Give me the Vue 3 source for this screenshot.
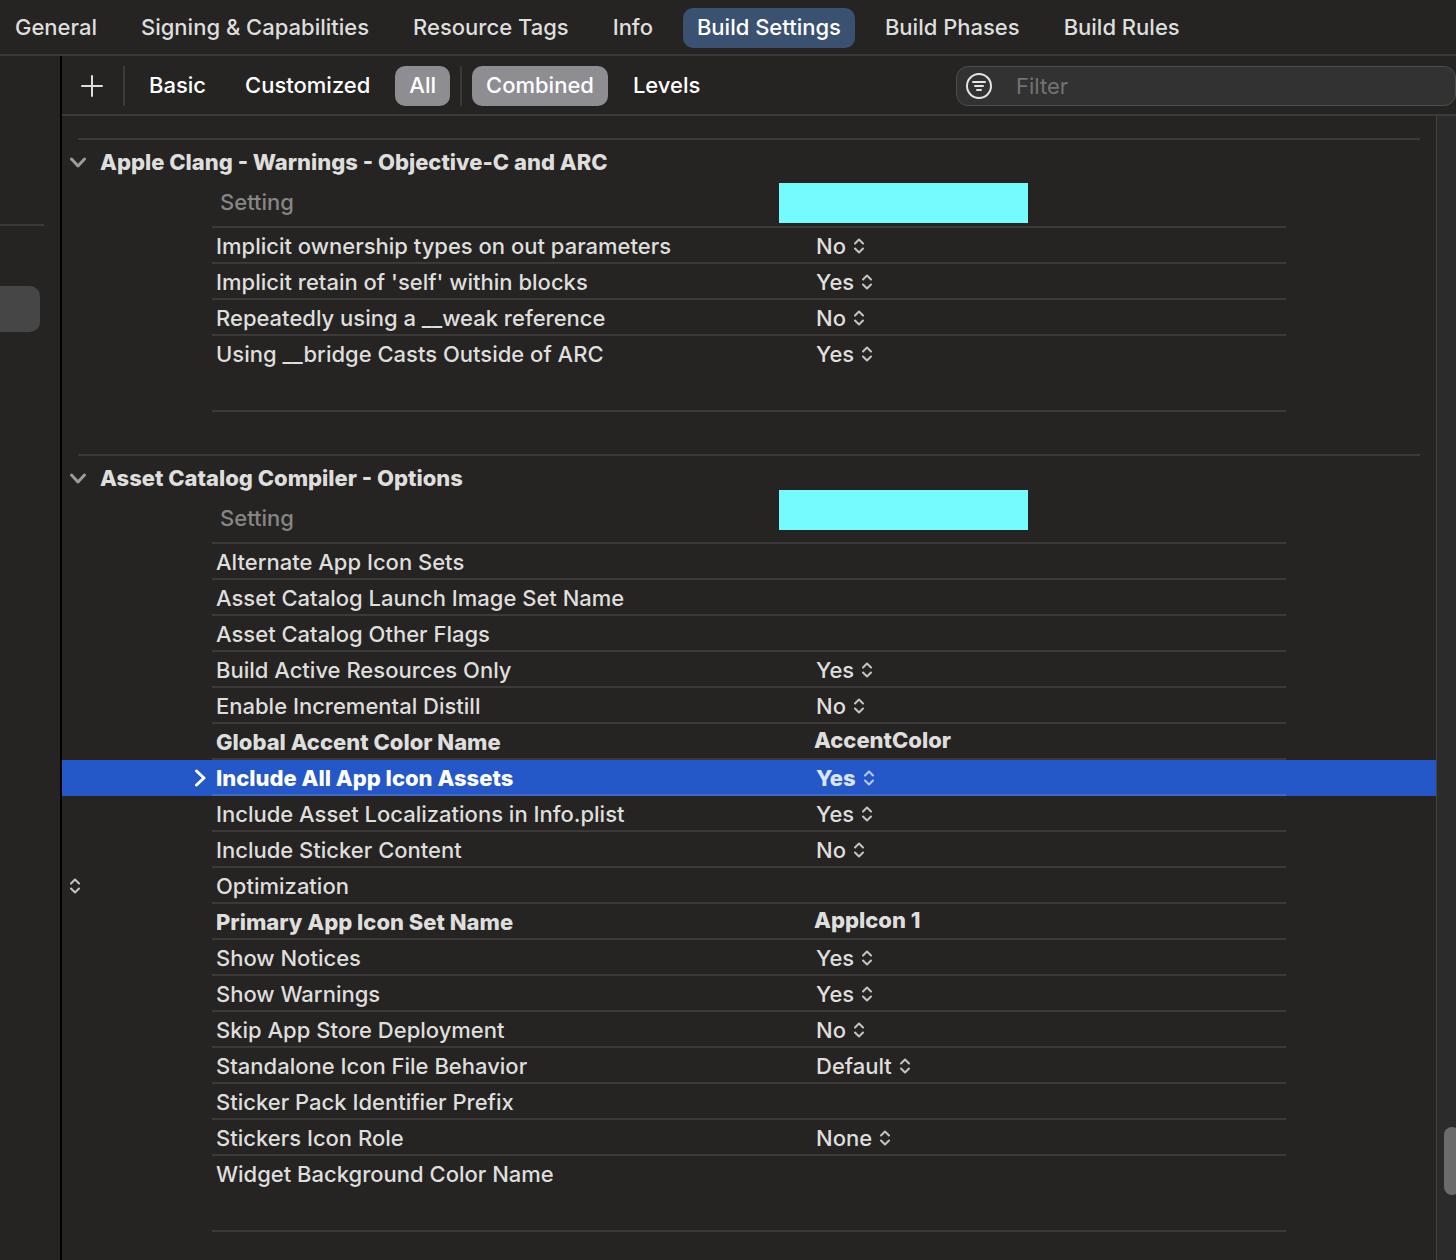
<template>
  <div class="editor">
    <nav class="tabs">
      <button
        v-for="tab in tabs"
        :key="tab"
        type="button"
        class="tab"
        :class="{ active: tab === activeTab }"
        @click="activeTab = tab"
      >{{ tab }}</button>
    </nav>

    <div class="body">
      <aside class="sidebar">
        <div class="sidebar-line"></div>
        <div class="sidebar-item"></div>
      </aside>

      <main class="main">
        <div class="toolbar">
          <button type="button" class="add" aria-label="Add build setting">
            <svg width="22" height="22" viewBox="0 0 22 22">
              <path d="M11 1v20M1 11h20" />
            </svg>
          </button>
          <span class="divider"></span>
          <div class="scopes">
            <button
              v-for="s in scopes"
              :key="s"
              type="button"
              class="scope"
              :class="{ active: s === scope }"
              @click="scope = s"
            >{{ s }}</button>
          </div>
          <span class="divider"></span>
          <div class="scopes">
            <button
              v-for="m in modes"
              :key="m"
              type="button"
              class="scope"
              :class="{ active: m === mode }"
              @click="mode = m"
            >{{ m }}</button>
          </div>
          <label class="filter">
            <svg width="26" height="26" viewBox="0 0 26 26">
              <circle cx="13" cy="13" r="12" />
              <path d="M7 9h12M9 13h8M11 17h4" />
            </svg>
            <input v-model="filter" type="text" placeholder="Filter" aria-label="Filter" />
          </label>
        </div>

        <div class="content">
          <div class="sections">
            <section v-for="section in sections" :key="section.title" class="section">
              <h2 class="section-title">
                <svg width="18" height="12" viewBox="0 0 18 12">
                  <path d="M2.5 3L9 10l6.500-7" />
                </svg>
                {{ section.title }}
              </h2>
              <table class="settings">
                <colgroup>
                  <col class="col-gutter" />
                  <col class="col-name" />
                  <col />
                  <col class="col-gutter" />
                </colgroup>
                <thead>
                  <tr>
                    <td></td>
                    <th scope="col">Setting</th>
                    <td class="target">
                      <span class="mask" :style="{ top: section.maskTop + 'px' }"></span>
                    </td>
                    <td></td>
                  </tr>
                </thead>
                <tbody>
                  <tr
                    v-for="row in section.rows"
                    :key="row.name"
                    :class="{ bold: row.bold, selected: row.selected }"
                  >
                    <td class="gutter">
                      <span v-if="row.loose" class="popup loose">
                        <select :aria-label="row.name"><option></option></select>
                        <svg width="10" height="16" viewBox="0 0 10 16">
                          <path d="M1 5.500l4-4 4 4M1 10.500l4 4 4-4" />
                        </svg>
                      </span>
                      <svg v-if="row.selected" class="disclosure" width="12" height="18" viewBox="0 0 12 18">
                        <path d="M2.500 2l7.500 7-7.500 7" />
                      </svg>
                    </td>
                    <th scope="row">{{ row.name }}</th>
                    <td class="value">
                      <span v-if="row.text" class="text">{{ row.text }}</span>
                      <span v-else-if="row.value" class="popup">
                        <select v-model="row.value" :aria-label="row.name">
                          <option v-for="o in row.options" :key="o">{{ o }}</option>
                        </select>
                        <svg width="10" height="16" viewBox="0 0 10 16">
                          <path d="M1 5.500l4-4 4 4M1 10.500l4 4 4-4" />
                        </svg>
                      </span>
                    </td>
                    <td></td>
                  </tr>
                </tbody>
              </table>
              <div class="section-end"></div>
            </section>
          </div>
          <div class="scrollbar">
            <div class="thumb"></div>
          </div>
        </div>
      </main>
    </div>
  </div>
</template>

<script setup>
import { reactive, ref } from 'vue'

const tabs = [
  'General',
  'Signing & Capabilities',
  'Resource Tags',
  'Info',
  'Build Settings',
  'Build Phases',
  'Build Rules',
]
const activeTab = ref('Build Settings')

const scopes = ['Basic', 'Customized', 'All']
const scope = ref('All')

const modes = ['Combined', 'Levels']
const mode = ref('Combined')

const filter = ref('')

const bool = (name, value, extra = {}) => ({ name, value, options: ['Yes', 'No'], ...extra })

const sections = reactive([
  {
    title: 'Apple Clang - Warnings - Objective-C and ARC',
    maskTop: -1,
    rows: [
      bool('Implicit ownership types on out parameters', 'No'),
      bool("Implicit retain of 'self' within blocks", 'Yes'),
      bool('Repeatedly using a __weak reference', 'No'),
      bool('Using __bridge Casts Outside of ARC', 'Yes'),
    ],
  },
  {
    title: 'Asset Catalog Compiler - Options',
    maskTop: -10,
    rows: [
      { name: 'Alternate App Icon Sets' },
      { name: 'Asset Catalog Launch Image Set Name' },
      { name: 'Asset Catalog Other Flags' },
      bool('Build Active Resources Only', 'Yes'),
      bool('Enable Incremental Distill', 'No'),
      { name: 'Global Accent Color Name', text: 'AccentColor', bold: true },
      bool('Include All App Icon Assets', 'Yes', { bold: true, selected: true }),
      bool('Include Asset Localizations in Info.plist', 'Yes'),
      bool('Include Sticker Content', 'No'),
      { name: 'Optimization', loose: true },
      { name: 'Primary App Icon Set Name', text: 'AppIcon 1', bold: true },
      bool('Show Notices', 'Yes'),
      bool('Show Warnings', 'Yes'),
      bool('Skip App Store Deployment', 'No'),
      { name: 'Standalone Icon File Behavior', value: 'Default', options: ['Default'] },
      { name: 'Sticker Pack Identifier Prefix' },
      { name: 'Stickers Icon Role', value: 'None', options: ['None'] },
      { name: 'Widget Background Color Name' },
    ],
  },
])
</script>

<style>
body {
  margin: 0;
  background: #252422;
}
</style>

<style scoped>
.editor {
  display: flex;
  flex-direction: column;
  min-height: 100vh;
  background: #252422;
  color: #dededd;
  font-family: Inter, "Liberation Sans", sans-serif;
  font-size: 22px;
  overflow: hidden;
}

button,
input,
select {
  margin: 0;
  padding: 0;
  border: 0;
  background: none;
  color: inherit;
  font: inherit;
}

svg {
  display: block;
  flex: none;
  fill: none;
  stroke: currentColor;
  stroke-linecap: round;
  stroke-linejoin: round;
}

.tabs {
  display: flex;
  align-items: center;
  gap: 16px;
  height: 56px;
  padding: 2px 0 0 1px;
  box-sizing: border-box;
  border-bottom: 2px solid #3b3a38;
}

.tab,
.scope {
  height: 40px;
  padding: 0 14px 2px;
  border-radius: 10px;
  font-weight: 500;
  white-space: nowrap;
}

.tab.active {
  background: #3a5172;
  color: #fff;
}

.body {
  display: flex;
  flex: 1;
}

.sidebar {
  flex: none;
  width: 60px;
  border-right: 2px solid #000;
}

.sidebar-line {
  width: 44px;
  height: 2px;
  margin-top: 168px;
  background: #3b3a38;
}

.sidebar-item {
  width: 40px;
  height: 46px;
  margin-top: 60px;
  border-radius: 0 10px 10px 0;
  background: #464646;
}

.main {
  display: flex;
  flex: 1;
  flex-direction: column;
  min-width: 0;
}

.toolbar {
  display: flex;
  align-items: center;
  height: 60px;
  padding-top: 2px;
  box-sizing: border-box;
  border-bottom: 2px solid #3b3a38;
  color: #fff;
}

.add {
  padding: 0 20px 0 19px;
  color: #dededd;
}

.add svg {
  stroke-width: 2;
}

.divider {
  width: 2px;
  height: 40px;
  background: #3b3a38;
}

.scopes {
  display: flex;
  gap: 11px;
  padding: 0 10px;
}

.scope.active {
  background: #8e8d92;
}

.filter {
  display: flex;
  align-items: center;
  gap: 24px;
  width: 500px;
  height: 40px;
  margin-left: auto;
  padding-left: 9px;
  box-sizing: border-box;
  border: 1px solid #4d4d4c;
  border-radius: 12px;
  background: #323232;
}

.filter svg {
  color: #e4e4e4;
  stroke-width: 2;
}

.filter input {
  flex: 1;
  min-width: 0;
  outline: none;
}

.filter input::placeholder {
  color: #737373;
  opacity: 1;
}

.content {
  display: flex;
  flex: 1;
}

.sections {
  flex: 1;
  min-width: 0;
  padding: 22px 0 28px;
}

.section + .section {
  margin-top: 42px;
}

.section-title {
  display: flex;
  align-items: center;
  gap: 13px;
  height: 44px;
  margin: 0 16px;
  border-top: 2px solid #3b3a38;
  font-size: 22px;
  font-weight: 800;
}

.section-title svg {
  margin-left: -9px;
  color: #9b9b9a;
  stroke-width: 3;
}

.settings {
  width: 100%;
  table-layout: fixed;
  border-collapse: separate;
  border-spacing: 0;
}

.col-gutter {
  width: 150px;
}

.col-name {
  width: 600px;
}

.settings th,
.settings td {
  height: 36px;
  padding: 2px 4px 0;
  box-sizing: border-box;
  line-height: 32px;
  text-align: left;
  font-weight: 450;
  white-space: nowrap;
}

.settings th,
.settings th + td {
  border-bottom: 2px solid #3b3a38;
}

.settings tbody tr:last-child > * {
  border-bottom-color: transparent;
}

.settings thead th,
.settings thead td {
  height: 44px;
  vertical-align: top;
}

.settings thead th {
  padding-left: 8px;
  color: #868685;
}

.settings .target {
  position: relative;
}

.mask {
  position: absolute;
  left: -33px;
  width: 249px;
  height: 40px;
  background: #73fbfd;
}

.settings .bold th,
.settings .bold .value {
  font-weight: 800;
}

.selected {
  background: #2458c9;
  color: #fff;
}

.settings .selected th,
.settings .selected th + td {
  border-bottom-color: #4069c7;
}

.settings .gutter {
  padding: 0 6px 0 8px;
}

.disclosure {
  margin-left: auto;
  stroke-width: 3;
}

.text {
  display: block;
  margin: 0 0 4px -2px;
  line-height: 28px;
}

.popup {
  position: relative;
  display: flex;
  align-items: center;
  width: fit-content;
  height: 32px;
}

.popup select {
  height: 32px;
  padding-right: 18px;
  appearance: none;
  field-sizing: content;
  outline: none;
}

.popup svg {
  position: absolute;
  right: 0;
  color: #c4c4c3;
  stroke-width: 2;
  pointer-events: none;
}

.selected .popup {
  color: #dbe5fb;
}

.selected .popup svg {
  color: #b9cbf3;
}

.popup.loose select {
  width: 10px;
  padding: 0;
}

.section-end {
  height: 38px;
  margin: 0 150px;
  border-bottom: 2px solid #3b3a38;
}

.scrollbar {
  position: relative;
  flex: none;
  width: 19px;
  border-left: 1px solid #434342;
  background: #2b2b2b;
  overflow: hidden;
}

.thumb {
  position: absolute;
  bottom: 65px;
  left: 7px;
  width: 16px;
  height: 68px;
  border-radius: 8px;
  background: #6b6b6b;
}
</style>
